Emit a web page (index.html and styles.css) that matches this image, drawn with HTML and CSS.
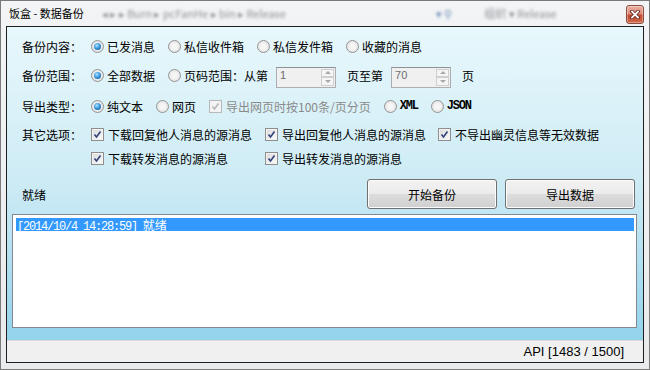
FILE: index.html
```html
<!DOCTYPE html>
<html lang="zh-CN">
<head>
    <meta charset="UTF-8">
    <title>饭盒 - 数据备份</title>
    <link rel="stylesheet" href="styles.css">
</head>
<body>
    <div class="window">
        <div class="titlebar">
            <span class="title">饭盒 - 数据备份</span>
            <span class="glass glass-path">◂ ▸ ▸ Burn ▸ pcFanHe ▸ bin ▸ Release</span>
            <span class="glass glass-search">▾ ⚲</span>
            <span class="glass glass-org">组织 ▾ Release</span>
            <button class="close">
                <svg width="10" height="9" viewBox="0 0 10 9">
                    <path d="M2 1.5 L8 7.5 M8 1.5 L2 7.5" stroke="#5a1f14" stroke-width="3.4" stroke-linecap="square"/>
                    <path d="M2 1.5 L8 7.5 M8 1.5 L2 7.5" stroke="#fff" stroke-width="1.8" stroke-linecap="square"/>
                </svg>
            </button>
        </div>

        <div class="client">
            <div class="main">
                <!-- 备份内容 -->
                <div class="row row-1">
                    <span class="label">备份内容：</span>
                    <span class="opt"><span class="radio on"></span>已发消息</span>
                    <span class="opt"><span class="radio"></span>私信收件箱</span>
                    <span class="opt"><span class="radio"></span>私信发件箱</span>
                    <span class="opt"><span class="radio"></span>收藏的消息</span>
                </div>

                <!-- 备份范围 -->
                <div class="row row-2">
                    <span class="label">备份范围：</span>
                    <span class="opt"><span class="radio on"></span>全部数据</span>
                    <span class="opt opt-last"><span class="radio"></span>页码范围：从第</span>
                    <span class="spin">
                        <span class="spin-val">1</span>
                        <span class="spin-btns"><span class="up"></span><span class="down"></span></span>
                    </span>
                    <span>页至第</span>
                    <span class="spin">
                        <span class="spin-val">70</span>
                        <span class="spin-btns"><span class="up"></span><span class="down"></span></span>
                    </span>
                    <span>页</span>
                </div>

                <!-- 导出类型 -->
                <div class="row row-3">
                    <span class="label">导出类型：</span>
                    <span class="opt"><span class="radio on"></span>纯文本</span>
                    <span class="opt"><span class="radio"></span>网页</span>
                    <span class="opt disabled">
                        <span class="check">
                            <svg width="11" height="11" viewBox="0 0 11 11"><path d="M2.5 5.5 L4.5 8 L8.5 2.5" fill="none" stroke="#b8b8b8" stroke-width="1.6"/></svg>
                        </span>导出网页时按100条/页分页
                    </span>
                    <span class="opt"><span class="radio"></span><span class="mono">XML</span></span>
                    <span class="opt"><span class="radio"></span><span class="mono">JSON</span></span>
                </div>

                <!-- 其它选项 -->
                <div class="options">
                    <span class="label">其它选项：</span>
                    <span class="opt"><span class="check"><svg width="11" height="11" viewBox="0 0 11 11"><path d="M2.5 5.5 L4.5 8 L8.5 2.5" fill="none" stroke="#32417a" stroke-width="1.6"/></svg></span>下载回复他人消息的源消息</span>
                    <span class="opt"><span class="check"><svg width="11" height="11" viewBox="0 0 11 11"><path d="M2.5 5.5 L4.5 8 L8.5 2.5" fill="none" stroke="#32417a" stroke-width="1.6"/></svg></span>导出回复他人消息的源消息</span>
                    <span class="opt"><span class="check"><svg width="11" height="11" viewBox="0 0 11 11"><path d="M2.5 5.5 L4.5 8 L8.5 2.5" fill="none" stroke="#32417a" stroke-width="1.6"/></svg></span>不导出幽灵信息等无效数据</span>
                    <span class="label"></span>
                    <span class="opt"><span class="check"><svg width="11" height="11" viewBox="0 0 11 11"><path d="M2.5 5.5 L4.5 8 L8.5 2.5" fill="none" stroke="#32417a" stroke-width="1.6"/></svg></span>下载转发消息的源消息</span>
                    <span class="opt"><span class="check"><svg width="11" height="11" viewBox="0 0 11 11"><path d="M2.5 5.5 L4.5 8 L8.5 2.5" fill="none" stroke="#32417a" stroke-width="1.6"/></svg></span>导出转发消息的源消息</span>
                </div>

                <!-- 状态 + 按钮 -->
                <div class="actions">
                    <span class="state">就绪</span>
                    <button class="btn">开始备份</button>
                    <button class="btn">导出数据</button>
                </div>

                <!-- 日志 -->
                <div class="log">
                    <div class="log-item selected"><span class="mono">[2014/10/4 14:28:59]</span> 就绪</div>
                </div>
            </div>
            <div class="statusbar">API [1483 / 1500]</div>
        </div>
    </div>
</body>
</html>
```

FILE: styles.css
```css
body {
    margin: 0;
    padding: 0;
    width: 650px;
    height: 370px;
    overflow: hidden;
    font-family: "Noto Sans CJK SC", "Liberation Sans", sans-serif;
    font-size: 12px;
    color: #000;
    background-color: #ececec;
}
.window {
    box-sizing: border-box;
    width: 650px;
    height: 370px;
    border: 1px solid #7a7a7a;
    background: linear-gradient(#f3f4f5, #e9eaeb);
    display: flex;
    flex-direction: column;
}
/* Title bar */
.titlebar {
    height: 25px;
    display: flex;
    align-items: center;
    padding: 0 5px 0 8px;
    overflow: hidden;
}
.title {
    font-size: 11px;
    line-height: 14px;
    margin-top: -2px;
}
.glass {
    color: #8e9298;
    filter: blur(1.4px);
    font-size: 11px;
    white-space: nowrap;
    margin-top: -2px;
}
.glass-path {
    margin-left: 18px;
}
.glass-search {
    margin-left: 150px;
    color: #6d8fb8;
}
.glass-org {
    margin-left: 32px;
}
.close {
    margin-left: auto;
    margin-top: 1px;
    width: 18px;
    height: 19px;
    padding: 0;
    border: 1px solid #8c4c40;
    border-radius: 3px;
    background: linear-gradient(#e9b2a5 0%, #dc8b77 45%, #c24a30 55%, #d06a4c 100%);
    box-shadow: inset 0 0 0 1px rgba(255, 255, 255, 0.35);
    display: flex;
    align-items: center;
    justify-content: center;
}
/* Client area */
.client {
    flex: 1;
    margin: 0 5px 6px;
    border: 1px solid #1f1f1f;
    display: flex;
    flex-direction: column;
}
.main {
    flex: 1;
    padding: 8px 6px 0 5px;
    background: linear-gradient(#e8f8fc 0%, #cdebf5 50%, #93d3ec 100%);
    display: flex;
    flex-direction: column;
}
.row {
    height: 22px;
    display: flex;
    align-items: center;
    padding-left: 10px;
    white-space: nowrap;
}
.row-2 {
    margin-top: 7px;
}
.row-3 {
    margin-top: 9px;
}
.label {
    width: 69px;
    flex-shrink: 0;
}
.opt {
    display: inline-flex;
    align-items: center;
    margin-right: 13px;
    white-space: nowrap;
}
.opt-last {
    margin-right: 0;
}
.disabled {
    color: #8a8a8a;
}
.mono {
    font-family: "Liberation Mono", monospace;
    font-size: 12px;
    letter-spacing: -1.2px;
}
.row-3 .mono {
    font-weight: bold;
}
/* Radio */
.radio {
    position: relative;
    box-sizing: border-box;
    width: 13px;
    height: 13px;
    margin-right: 3px;
    border: 1px solid #939393;
    border-radius: 50%;
    background: radial-gradient(circle at 50% 50%, #f6f6f6 30%, #d9d9d9 100%);
    flex-shrink: 0;
}
.radio.on::after {
    content: "";
    position: absolute;
    left: 2px;
    top: 2px;
    width: 7px;
    height: 7px;
    border-radius: 50%;
    background: radial-gradient(circle at 40% 35%, #b4e6ff 0%, #3b9ae0 45%, #0d4a8c 100%);
}
/* Checkbox */
.check {
    box-sizing: border-box;
    width: 13px;
    height: 13px;
    margin-right: 4px;
    border: 1px solid #8f8f8f;
    background: linear-gradient(135deg, #dadada, #fbfbfb);
    box-shadow: inset 0 0 0 1px #f2f2f2;
    display: flex;
    align-items: center;
    justify-content: center;
    flex-shrink: 0;
}
.disabled .check {
    border-color: #b8b8b8;
    background: #f4f4f4;
}
/* Spin box */
.spin {
    box-sizing: border-box;
    width: 60px;
    height: 21px;
    margin: 4px 11px 0 8px;
    border: 1px solid #abadb3;
    border-top-color: #8e9197;
    background-color: #f0f0f0;
    display: flex;
}
.spin-val {
    flex: 1;
    padding: 1px 0 0 3px;
    color: #6d6d6d;
    font-family: "Liberation Sans", sans-serif;
    font-size: 11px;
}
.spin-btns {
    width: 13px;
    margin: 1px;
    display: flex;
    flex-direction: column;
}
.spin-btns span {
    flex: 1;
    border: 1px solid #cfcfcf;
    background: #f5f5f5;
    display: flex;
    align-items: center;
    justify-content: center;
}
.spin-btns .up::after {
    content: "";
    border-left: 3px solid transparent;
    border-right: 3px solid transparent;
    border-bottom: 3px solid #a8a8a8;
}
.spin-btns .down::after {
    content: "";
    border-left: 3px solid transparent;
    border-right: 3px solid transparent;
    border-top: 3px solid #a8a8a8;
}
/* Other options */
.options {
    margin-top: 6px;
    padding-left: 10px;
    display: grid;
    grid-template-columns: 69px 174px 173px auto;
    grid-auto-rows: 22px;
    row-gap: 2px;
    align-items: center;
    white-space: nowrap;
}
.options .opt {
    margin-right: 0;
}
/* Actions */
.actions {
    margin-top: 10px;
    padding-left: 10px;
    display: flex;
    align-items: center;
    gap: 8px;
}
.state {
    flex: 1;
}
.btn {
    width: 130px;
    height: 30px;
    padding: 0;
    font-family: "Noto Sans CJK SC", sans-serif;
    font-size: 12px;
    color: #000;
    border: 1px solid #707070;
    border-radius: 3px;
    background: linear-gradient(#f2f2f2 0%, #ebebeb 50%, #dddddd 51%, #cfcfcf 100%);
    box-shadow: inset 0 0 0 1px #fcfcfc;
}
.btn:last-child {
    margin-right: 2px;
}
/* Log list */
.log {
    margin-top: 5px;
    height: 114px;
    box-sizing: border-box;
    border: 1px solid #828790;
    background-color: white;
    padding: 3px 2px 0 3px;
}
.log-item {
    height: 13px;
    line-height: 13px;
    padding-left: 1px;
    white-space: nowrap;
}
.log-item .mono {
    margin-right: 3px;
}
.log-item.selected {
    background-color: #3399ff;
    color: white;
}
/* Status bar */
.statusbar {
    height: 21px;
    border-top: 1px solid #d9d9d9;
    background-color: #f0f0f0;
    display: flex;
    align-items: center;
    justify-content: flex-end;
    padding-right: 19px;
    font-family: "Liberation Sans", sans-serif;
    font-size: 13px;
}
```
